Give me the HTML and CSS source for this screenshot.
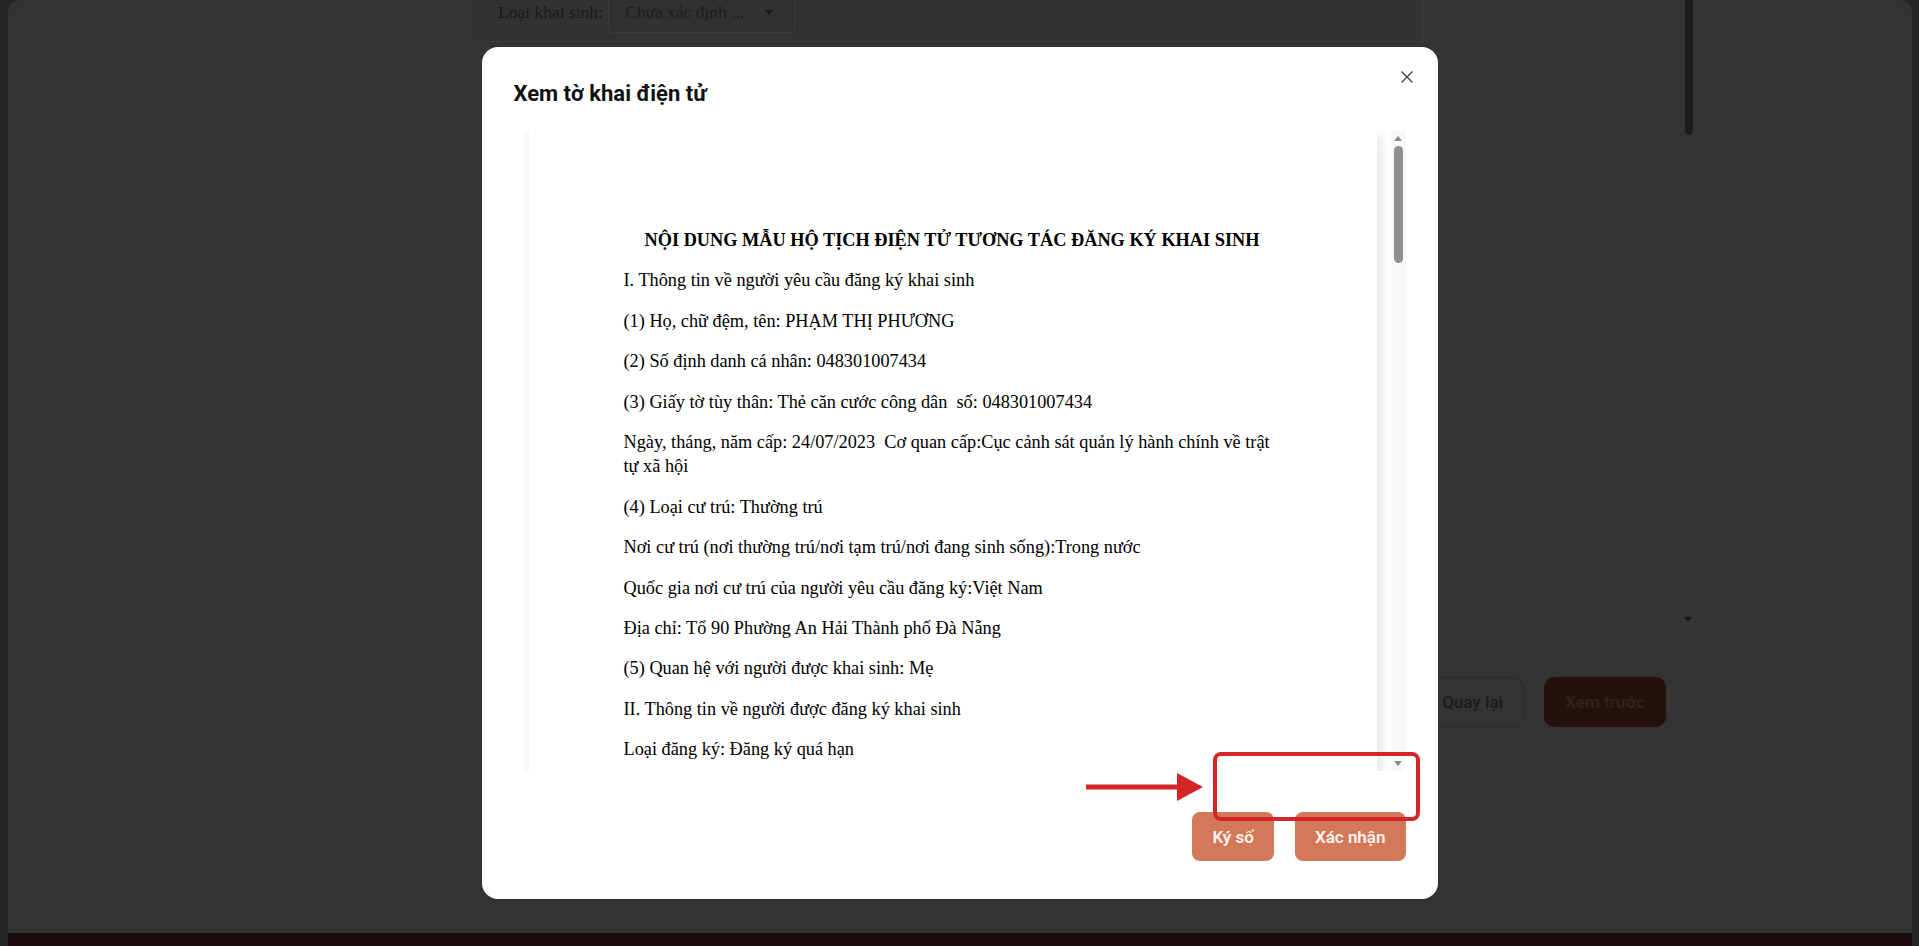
FILE: index.html
```html
<!DOCTYPE html>
<html lang="vi">
<head>
    <meta charset="UTF-8">
    <meta name="viewport" content="width=device-width, initial-scale=1.0">
    <title>Xem tờ khai điện tử</title>
    <link rel="stylesheet" href="styles.css">
</head>
<body>

<div class="app">
    <div class="app-main">
        <div class="content">
            <div class="form-area">
                <div class="filter-row">
                    <label class="filter-label">Loại khai sinh:</label>
                    <div class="select">
                        <span>Chưa xác định ...</span>
                        <span class="select-caret"></span>
                    </div>
                </div>
                <div class="form-body"></div>
                <div class="combo-caret"></div>
                <div class="actions">
                    <button class="page-btn page-btn-outline">Quay lại</button>
                    <button class="page-btn page-btn-fill">Xem trước</button>
                </div>
            </div>
        </div>
    </div>
    <div class="app-bottom"></div>
</div>

<div class="backdrop">
    <div class="modal">
        <h2 class="modal-title">Xem tờ khai điện tử</h2>
        <button class="modal-close" aria-label="Đóng">
            <svg width="14" height="14" viewBox="0 0 14 14"><path d="M1.5 1.5L12.5 12.5M12.5 1.5L1.5 12.5" stroke="#444" stroke-width="1.4" fill="none"/></svg>
        </button>

        <div class="doc-view">
            <div class="doc-scroll">
                <div class="doc-page">
                    <p class="doc-title">NỘI DUNG MẪU HỘ TỊCH ĐIỆN TỬ TƯƠNG TÁC ĐĂNG KÝ KHAI SINH</p>
                    <p>I. Thông tin về người yêu cầu đăng ký khai sinh</p>
                    <p>(1) Họ, chữ đệm, tên: PHẠM THỊ PHƯƠNG</p>
                    <p>(2) Số định danh cá nhân: 048301007434</p>
                    <p>(3) Giấy tờ tùy thân: Thẻ căn cước công dân&nbsp; số: 048301007434</p>
                    <p>Ngày, tháng, năm cấp: 24/07/2023&nbsp; Cơ quan cấp:Cục cảnh sát quản lý hành chính về trật tự xã hội</p>
                    <p>(4) Loại cư trú: Thường trú</p>
                    <p>Nơi cư trú (nơi thường trú/nơi tạm trú/nơi đang sinh sống):Trong nước</p>
                    <p>Quốc gia nơi cư trú của người yêu cầu đăng ký:Việt Nam</p>
                    <p>Địa chỉ: Tổ 90 Phường An Hải Thành phố Đà Nẵng</p>
                    <p>(5) Quan hệ với người được khai sinh: Mẹ</p>
                    <p>II. Thông tin về người được đăng ký khai sinh</p>
                    <p>Loại đăng ký: Đăng ký quá hạn</p>
                </div>
            </div>
            <div class="doc-scrollbar">
                <span class="sb-arrow sb-up"></span>
                <span class="sb-thumb"></span>
                <span class="sb-arrow sb-down"></span>
            </div>
        </div>

        <div class="modal-footer">
            <button class="btn">Ký số</button>
            <button class="btn">Xác nhận</button>
        </div>

        <div class="mark-box"></div>
        <svg class="mark-arrow" width="118" height="32" viewBox="0 0 118 32">
            <line x1="0" y1="16" x2="94" y2="16" stroke="#d42626" stroke-width="5"/>
            <polygon points="91,2 117,16 91,30" fill="#d42626"/>
        </svg>
    </div>
</div>

</body>
</html>
```

FILE: styles.css
```css
body {
    margin: 0;
    height: 946px;
    overflow: hidden;
    background-color: #4c4c4c;
    font-family: Roboto, 'Noto Sans', sans-serif;
}

/* page under the dialog */
.app {
    margin: 0 7px 0 8px;
    height: 946px;
    display: flex;
    flex-direction: column;
}

.app-main {
    flex: 1;
    background-color: #666;
    border-radius: 10px 10px 0 0;
    overflow: hidden;
}

.app-bottom {
    height: 13px;
    background-color: #36181a;
}

.content {
    margin-left: 176px;
    width: 1541px;
    height: 785px;
    background-color: #696969;
}

.form-area {
    position: relative;
    margin-left: 289px;
    width: 1224px;
    height: 785px;
    display: flex;
    flex-direction: column;
}

.form-area::after {
    content: '';
    position: absolute;
    right: 4px;
    top: 0;
    width: 8px;
    height: 135px;
    border-radius: 0 0 4px 4px;
    background-color: #383838;
}

.filter-row {
    box-sizing: border-box;
    width: 950px;
    height: 52px;
    margin-top: -10px;
    padding: 0 0 6px 25px;
    display: flex;
    align-items: center;
    gap: 5px;
    background-color: #646464;
    border-right: 1px solid #747474;
    border-bottom: 1px solid #747474;
    font-family: 'Liberation Serif', 'Times New Roman', serif;
    font-size: 17.5px;
    color: #343434;
}

.select {
    box-sizing: border-box;
    width: 187px;
    height: 40px;
    padding: 0 21px 0 16px;
    display: flex;
    align-items: center;
    justify-content: space-between;
    border: 1px solid #747474;
    border-radius: 3px;
    background-color: #626262;
    color: #3c3c3c;
}

.select-caret,
.combo-caret {
    width: 0;
    height: 0;
    border-left: 4px solid transparent;
    border-right: 4px solid transparent;
    border-top: 5px solid #333;
}

.form-body {
    height: 575px;
}

.combo-caret {
    align-self: flex-end;
    margin-right: 5px;
}

.actions {
    margin: 55px 31px 0 0;
    display: flex;
    justify-content: flex-end;
    gap: 20px;
}

.page-btn {
    height: 50px;
    padding: 0 20px;
    border-radius: 10px;
    font-family: Roboto, sans-serif;
    font-size: 17px;
    font-weight: 600;
}

.page-btn-outline {
    background: transparent;
    border: 1px solid #545454;
    color: #3a3a3a;
}

.page-btn-fill {
    min-width: 122px;
    background-color: #48231a;
    border: none;
    color: #6a4033;
}

/* dialog */
.backdrop {
    position: fixed;
    inset: 0;
    background-color: rgba(0, 0, 0, 0.5);
    display: flex;
    align-items: center;
    justify-content: center;
}

.modal {
    position: relative;
    box-sizing: border-box;
    width: 956px;
    height: 852px;
    padding: 32px 32px 38px;
    display: flex;
    flex-direction: column;
    background-color: #fff;
    border-radius: 16px;
}

.modal-title {
    margin: 0;
    height: 30px;
    font-size: 22px;
    font-weight: 700;
    line-height: 30px;
    color: #111;
}

.modal-close {
    position: absolute;
    top: 23px;
    right: 24px;
    width: 14px;
    height: 14px;
    padding: 0;
    border: none;
    background: none;
    display: flex;
}

.doc-view {
    margin-top: 22px;
    height: 640px;
    display: flex;
}

.doc-scroll {
    flex: 1;
    overflow: hidden;
    background-color: #fff;
}

.doc-scrollbar {
    width: 15px;
    display: flex;
    flex-direction: column;
    align-items: center;
    background-color: #f8f8f8;
}

.sb-arrow {
    width: 15px;
    height: 15px;
    display: flex;
    align-items: center;
    justify-content: center;
}

.sb-arrow::before {
    content: '';
    width: 0;
    height: 0;
    border-left: 4px solid transparent;
    border-right: 4px solid transparent;
}

.sb-up::before {
    border-bottom: 5px solid #8a8a8a;
}

.sb-down {
    margin-top: auto;
}

.sb-down::before {
    border-top: 5px solid #8a8a8a;
}

.sb-thumb {
    width: 9px;
    height: 117px;
    border-radius: 5px;
    background-color: #8f8f8f;
}

.doc-page {
    box-sizing: border-box;
    width: 848px;
    min-height: 3300px;
    margin-left: 15px;
    padding: 98px 96px 96px 95px;
    background-color: #fff;
    box-shadow: 10px 0 10px -4px rgba(0, 0, 0, 0.08), -2px 0 6px rgba(0, 0, 0, 0.06);
    font-family: 'Liberation Serif', 'Times New Roman', serif;
    font-size: 18.3px;
    line-height: 1.3;
    color: #000;
}

.doc-page p {
    margin: 16.7px 0;
}

.doc-page .doc-title {
    margin-top: 0;
    text-align: center;
    font-weight: bold;
}

.modal-footer {
    margin-top: 41px;
    display: flex;
    justify-content: flex-end;
    gap: 21px;
}

.btn {
    height: 49px;
    padding: 0 20px;
    border: none;
    border-radius: 8px;
    background-color: #d4785a;
    color: #fff4ee;
    font-family: Roboto, sans-serif;
    font-size: 17px;
    font-weight: 600;
}

/* red marks drawn on the screenshot */
.mark-box {
    position: absolute;
    left: 731px;
    top: 705px;
    width: 207px;
    height: 69px;
    box-sizing: border-box;
    border: 4px solid #d42626;
    border-radius: 8px;
}

.mark-arrow {
    position: absolute;
    left: 604px;
    top: 724px;
}
```
